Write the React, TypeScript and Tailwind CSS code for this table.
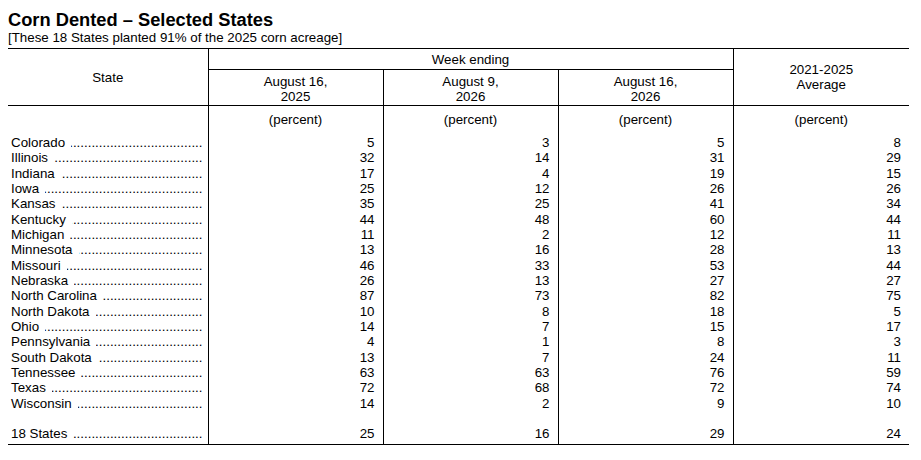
import React from 'react';

interface Row {
  state: string;
  values: number[];
}

const ROWS: Row[] = [
  { state: 'Colorado', values: [5, 3, 5, 8] },
  { state: 'Illinois', values: [32, 14, 31, 29] },
  { state: 'Indiana', values: [17, 4, 19, 15] },
  { state: 'Iowa', values: [25, 12, 26, 26] },
  { state: 'Kansas', values: [35, 25, 41, 34] },
  { state: 'Kentucky', values: [44, 48, 60, 44] },
  { state: 'Michigan', values: [11, 2, 12, 11] },
  { state: 'Minnesota', values: [13, 16, 28, 13] },
  { state: 'Missouri', values: [46, 33, 53, 44] },
  { state: 'Nebraska', values: [26, 13, 27, 27] },
  { state: 'North Carolina', values: [87, 73, 82, 75] },
  { state: 'North Dakota', values: [10, 8, 18, 5] },
  { state: 'Ohio', values: [14, 7, 15, 17] },
  { state: 'Pennsylvania', values: [4, 1, 8, 3] },
  { state: 'South Dakota', values: [13, 7, 24, 11] },
  { state: 'Tennessee', values: [63, 63, 76, 59] },
  { state: 'Texas', values: [72, 68, 72, 74] },
  { state: 'Wisconsin', values: [14, 2, 9, 10] },
];

const TOTAL: Row = { state: '18 States', values: [25, 16, 29, 24] };

const DOTS = '.'.repeat(60);

// state name followed by a dot leader that ends flush at the column edge
const StateCell: React.FC<{ name: string; extra?: string }> = ({ name, extra = '' }) => (
  <td className={`pl-[3px] pr-[5px] ${extra}`}>
    <div className="flex">
      <span className="whitespace-nowrap">{name}</span>
      <span dir="rtl" className="ml-[6px] flex-1 overflow-hidden whitespace-nowrap">
        {DOTS}
      </span>
    </div>
  </td>
);

const DataRow: React.FC<{ row: Row; extra?: string }> = ({ row, extra = '' }) => (
  <tr>
    <StateCell name={row.state} extra={extra} />
    {row.values.map((v, i) => (
      <td key={i} className={`border-l border-black pr-[8px] text-right ${extra}`}>
        {v}
      </td>
    ))}
  </tr>
);

const App: React.FC = () => {
  return (
    <div className="min-h-screen bg-white text-black font-['Liberation_Sans',Arial,sans-serif] text-[13.33px] leading-[15.33px]">
      <div className="pl-[8px] pt-[9px]">
        <div className="text-[18.3px] leading-[21px] font-bold">Corn Dented – Selected States</div>
        <div>[These 18 States planted 91% of the 2025 corn acreage]</div>
      </div>

      <table className="ml-[8px] mt-[3px] w-[901px] table-fixed border-collapse border-y border-black">
        <colgroup>
          <col className="w-[200px]" />
          <col className="w-[175px]" />
          <col className="w-[175px]" />
          <col className="w-[175px]" />
          <col className="w-[176px]" />
        </colgroup>
        <thead>
          <tr>
            <th rowSpan={2} className="border-r border-b border-black font-normal text-center align-middle">
              State
            </th>
            <th colSpan={3} className="border-b border-black font-normal text-center pt-[3px] pb-[1px]">
              Week ending
            </th>
            <th rowSpan={2} className="border-l border-b border-black font-normal text-center align-middle">
              2021-2025
              <br />
              Average
            </th>
          </tr>
          <tr>
            {['August 16,', 'August 9,', 'August 16,'].map((d, i) => (
              <th key={i} className="border-l border-b border-black font-normal text-center pt-[4px] pb-[1px]">
                {d}
                <br />
                {i === 0 ? '2025' : '2026'}
              </th>
            ))}
          </tr>
        </thead>
        <tbody>
          <tr>
            <td className="pt-[6px] pb-[7.5px]"></td>
            {[0, 1, 2, 3].map((i) => (
              <td key={i} className="border-l border-black text-center pt-[6px] pb-[7.5px]">
                (percent)
              </td>
            ))}
          </tr>
          {ROWS.map((r) => (
            <DataRow key={r.state} row={r} />
          ))}
          <tr>
            <td>&nbsp;</td>
            {[0, 1, 2, 3].map((i) => (
              <td key={i} className="border-l border-black">
                &nbsp;
              </td>
            ))}
          </tr>
          <DataRow row={TOTAL} extra="pb-[2px]" />
        </tbody>
      </table>
    </div>
  );
};

export default App;
